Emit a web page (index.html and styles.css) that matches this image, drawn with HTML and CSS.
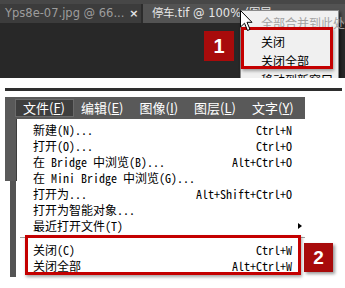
FILE: index.html
```html
<!DOCTYPE html>
<html lang="zh-CN">
<head>
  <meta charset="UTF-8" />
  <title>关闭文档</title>
  <link rel="stylesheet" href="styles.css">
</head>
<body>
  <!-- Shot 1: tab context menu -->
  <section class="ps">
    <div class="ps-top"></div>
    <div class="tabs">
      <div class="tab"><span class="tab-name">Yps8e-07.jpg @ 66...</span><span class="tab-x">×</span></div>
      <div class="tab tab-active"><span class="tab-name">停车.tif @ 100% (图层</span></div>
    </div>

    <div class="ctx">
      <div class="ctx-item ctx-off">全部合并到此处</div>
      <div class="ctx-item">关闭</div>
      <div class="ctx-item">关闭全部</div>
      <div class="ctx-item">移动到新窗口</div>
    </div>
    <div class="mark mark-1"></div>
    <div class="badge badge-1">1</div>
    <svg class="cursor" width="14" height="24" viewBox="0 0 14 24">
      <path d="M1.5 1.5 L1.5 18 L5.5 14.2 L8.5 21.5 L11 20.4 L8 13.3 L13 13.3 Z" fill="#fff" stroke="#000" stroke-width="1" />
    </svg>
  </section>

  <!-- Shot 2: File menu -->
  <section class="ms">
    <div class="ms-line"></div>
    <div class="menubar">
      <span class="mb-item mb-open">文件(<u>F</u>)</span>
      <span class="mb-item">编辑(<u>E</u>)</span>
      <span class="mb-item">图像(<u>I</u>)</span>
      <span class="mb-item">图层(<u>L</u>)</span>
      <span class="mb-item">文字(<u>Y</u>)</span>
    </div>
    <div class="ms-body">
      <div class="side">
        <div class="side-top"></div>
        <div class="side-rest"></div>
      </div>
      <ul class="drop">
        <li><span>新建(N)...</span><span class="key">Ctrl+N</span></li>
        <li><span>打开(O)...</span><span class="key">Ctrl+O</span></li>
        <li><span>在 Bridge 中浏览(B)...</span><span class="key">Alt+Ctrl+O</span></li>
        <li><span>在 Mini Bridge 中浏览(G)...</span><span class="key"></span></li>
        <li><span>打开为...</span><span class="key">Alt+Shift+Ctrl+O</span></li>
        <li><span>打开为智能对象...</span><span class="key"></span></li>
        <li class="sub"><span>最近打开文件(T)</span><span class="key"></span></li>
        <li class="sep"></li>
        <li><span>关闭(C)</span><span class="key">Ctrl+W</span></li>
        <li><span>关闭全部</span><span class="key">Alt+Ctrl+W</span></li>
      </ul>
    </div>
    <div class="mark mark-2"></div>
    <div class="badge badge-2">2</div>
  </section>
</body>
</html>
```

FILE: styles.css
```css
/* Reset */
* { margin: 0; padding: 0; box-sizing: border-box; }
body { width: 345px; height: 288px; background: #fff; overflow: hidden; font-family: "Noto Sans CJK SC", sans-serif; }
ul { list-style: none; }

/* Shot 1 */
.ps { position: relative; height: 78px; background: #282828; overflow: hidden; }
.ps-top { height: 4px; background: #474747; }
.tabs { display: flex; height: 19px; background: #2c2c2c; white-space: nowrap; }
.tab { display: flex; align-items: center; width: 141px; padding-left: 5px; background: #3c3c3c; color: #9c9c9c; font: 11.5px/19px "DejaVu Sans", sans-serif; overflow: hidden; }
.tab-x { margin-left: 5px; color: #e4e4e4; font-size: 11px; font-weight: bold; }
.tab-active { flex: 1; margin-left: 2px; padding-left: 9px; background: #535353; color: #e6e6e6; }

.ctx { position: absolute; left: 240px; top: 10px; width: 99px; height: 80px; padding-top: 2px; background: #f0f0f0; border: 1px solid #8a8a8a; box-shadow: 2px 2px 3px rgba(0,0,0,0.5); }
.ctx-item { height: 19px; padding-left: 20px; font-size: 12px; line-height: 19px; color: #000; white-space: nowrap; }
.ctx-off { color: #a3a3a3; }

.cursor { position: absolute; left: 239px; top: 9px; }

/* Annotations */
.mark { position: absolute; border: 3px solid #c40000; box-shadow: 1px 2px 3px rgba(0,0,0,0.35); }
.mark-1 { left: 241px; top: 27px; width: 92px; height: 42px; }
.mark-2 { left: 25px; top: 147px; width: 276px; height: 40px; }
.badge { position: absolute; width: 30px; height: 30px; background: #a80b0b; color: #fff; text-align: center; font-family: "Liberation Sans", sans-serif; font-weight: bold; box-shadow: 2px 2px 3px rgba(0,0,0,0.4); }
.badge-1 { left: 204px; top: 31px; font-size: 20px; line-height: 30px; box-shadow: none; }
.badge-2 { left: 304px; top: 155px; width: 29px; height: 29px; font-size: 19px; line-height: 29px; }

/* Shot 2 */
.ms { position: relative; margin-top: 10px; }
.ms-line { height: 3px; margin: 1px 3px 0 5px; background: #2e2e2e; }
.menubar { display: flex; align-items: center; width: 300px; height: 22px; margin: 6px 0 0 5px; padding-left: 11px; background: #595959; overflow: hidden; white-space: nowrap; }
.mb-item { height: 16px; padding: 0 8px 0 7px; margin-right: 1px; color: #fff; font-size: 13px; line-height: 16px; }
.mb-item u { text-decoration-thickness: 1px; text-underline-offset: 1px; }
.mb-open { background: #3e3e3e; outline: 1px solid #6a6a6a; }

.ms-body { display: flex; height: 158px; }
.side { display: flex; flex-direction: column; width: 12px; margin-left: 5px; }
.side-top { height: 62px; background: #5a5a5a; border-right: 1px solid #3c3c3c; }
.side-rest { flex: 1; width: 6px; margin-left: 5px; background: #545454; }

.drop { width: 290px; padding-top: 3px; background: #fff; font-family: "Noto Sans Mono CJK SC", "Liberation Mono", monospace; font-size: 12px; color: #000; }
.drop li { position: relative; display: flex; justify-content: space-between; height: 16px; padding: 0 15px 0 16px; line-height: 16px; white-space: nowrap; }
.drop li.sep { height: 8px; margin: 0 2px 0 3px; padding: 0; }
.drop li.sep::before { content: ''; position: absolute; left: 0; right: 0; top: 3px; height: 1px; background: #a0a0a0; }
.drop li.sub::after { content: ''; position: absolute; right: 5px; top: 5px; border-left: 4px solid #000; border-top: 3px solid transparent; border-bottom: 3px solid transparent; }
```
